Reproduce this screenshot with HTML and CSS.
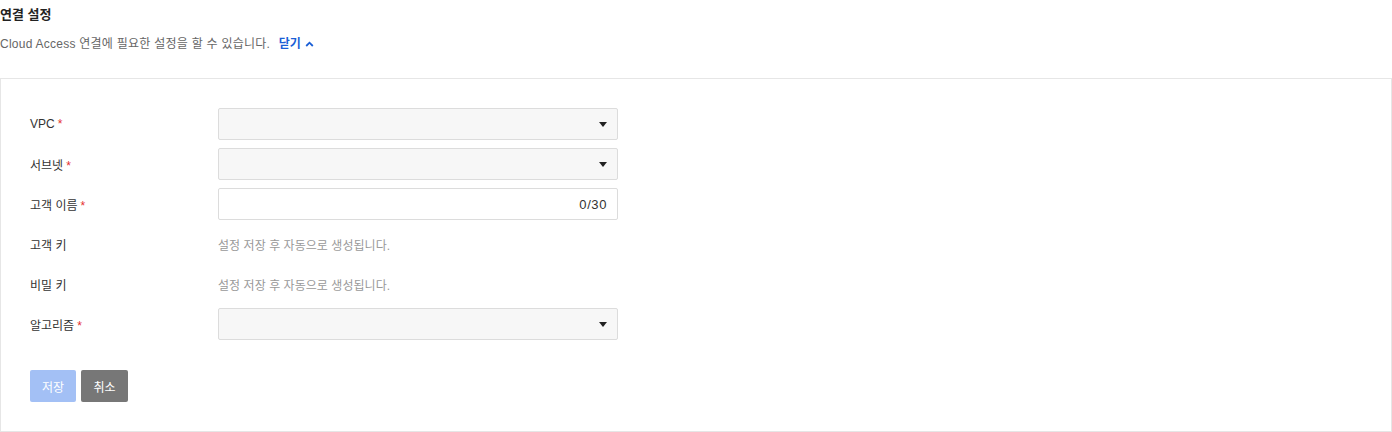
FILE: index.html
```html
<!DOCTYPE html>
<html lang="ko">
<head>
<meta charset="utf-8">
<title>연결 설정</title>
<link rel="stylesheet" href="styles.css">
</head>
<body>
<div class="page">
  <div class="header">
    <h2 class="title">연결 설정</h2>
    <p class="desc">Cloud Access 연결에 필요한 설정을 할 수 있습니다. <a class="toggle">닫기 <svg class="chev" width="9" height="6" viewBox="0 0 9 6"><path d="M1.2 5 L4.5 1.7 L7.8 5" fill="none" stroke="#1a5fd6" stroke-width="1.8"/></svg></a></p>
  </div>
  <div class="card">
    <div class="form">
      <div class="row">
        <div class="label">VPC<span class="req">*</span></div>
        <div class="select"><span class="caret"></span></div>
      </div>
      <div class="row">
        <div class="label">서브넷<span class="req">*</span></div>
        <div class="select"><span class="caret"></span></div>
      </div>
      <div class="row">
        <div class="label">고객 이름<span class="req">*</span></div>
        <div class="input"><span class="count">0/30</span></div>
      </div>
      <div class="row">
        <div class="label">고객 키</div>
        <div class="note">설정 저장 후 자동으로 생성됩니다.</div>
      </div>
      <div class="row">
        <div class="label">비밀 키</div>
        <div class="note">설정 저장 후 자동으로 생성됩니다.</div>
      </div>
      <div class="row">
        <div class="label">알고리즘<span class="req">*</span></div>
        <div class="select"><span class="caret"></span></div>
      </div>
    </div>
    <div class="actions">
      <button class="btn btn-save">저장</button>
      <button class="btn btn-cancel">취소</button>
    </div>
  </div>
</div>
</body>
</html>
```
FILE: styles.css
```css
* { box-sizing: border-box; }
html, body {
  margin: 0;
  padding: 0;
  background: #fff;
}
body {
  font-family: "Liberation Sans", "Noto Sans CJK KR", sans-serif;
  font-size: 12px;
  color: #333;
}
.page {
  width: 1392px;
}
.header {
  padding-top: 6px;
  height: 78px;
}
.title {
  margin: 0;
  font-size: 13px;
  font-weight: 600;
  color: #222;
  line-height: 18px;
}
.desc {
  margin: 11px 0 0;
  font-size: 12px;
  color: #666;
  line-height: 18px;
  letter-spacing: 0.25px;
}
.toggle {
  margin-left: 5px;
  color: #1a5fd6;
  font-weight: 700;
  cursor: pointer;
  letter-spacing: 0;
}
.chev {
  vertical-align: 1px;
  margin-left: 1px;
}
.card {
  border: 1px solid #e6e6e6;
  height: 354px;
  padding: 29px 29px;
}
.form {
  display: flex;
  flex-direction: column;
  gap: 8px;
}
.row {
  display: flex;
  align-items: center;
  height: 32px;
}
.label {
  width: 188px;
  color: #333;
  font-size: 12px;
}
.req {
  color: #e5302f;
  margin-left: 3px;
}
.select, .input {
  width: 400px;
  height: 32px;
  border: 1px solid #dcdcdc;
  border-radius: 2px;
  display: flex;
  align-items: center;
  justify-content: flex-end;
  padding-right: 10px;
}
.select {
  background: #f7f7f7;
}
.input {
  background: #fff;
  color: #333;
}
.count {
  font-size: 13px;
  letter-spacing: 0.6px;
}
.caret {
  width: 0;
  height: 0;
  border-left: 4px solid transparent;
  border-right: 4px solid transparent;
  border-top: 5px solid #222;
}
.note {
  color: #999;
  font-size: 12px;
  letter-spacing: 0.05px;
}
.actions {
  display: flex;
  gap: 5px;
  margin-top: 30px;
}
.btn {
  height: 32px;
  padding: 0 11px;
  border: none;
  border-radius: 2px;
  color: #fff;
  font-family: "Liberation Sans", "Noto Sans CJK KR", sans-serif;
  font-size: 12px;
}
.btn-save {
  background: #a3c0f5;
  width: 46px;
}
.btn-cancel {
  background: #777;
  width: 47px;
}
```
